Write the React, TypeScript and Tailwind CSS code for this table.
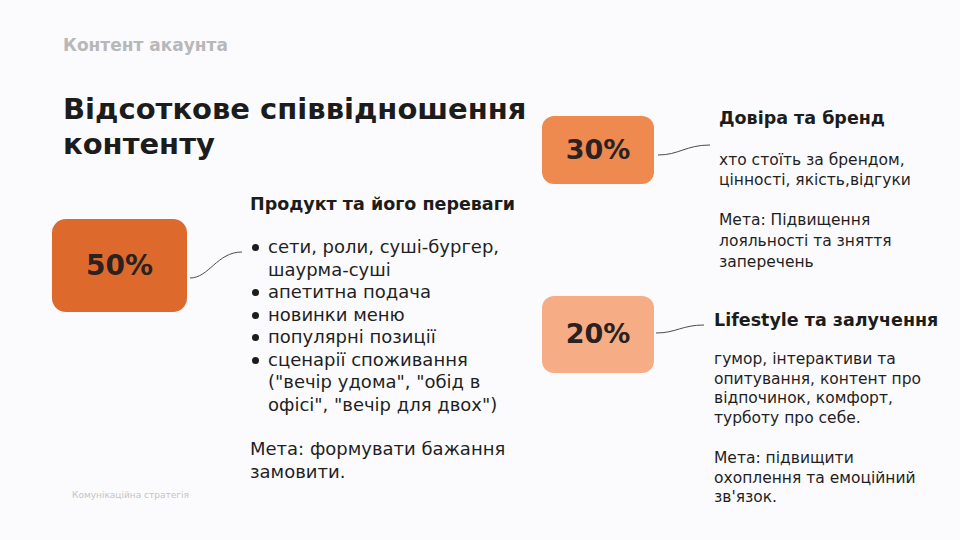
import React from "react";

const font = { fontFamily: '"DejaVu Sans", "Noto Sans", sans-serif' };

function Connector({ w, h, d }: { w: number; h: number; d: string }) {
  return (
    <svg width={w} height={h} viewBox={`0 0 ${w} ${h}`} className="shrink-0">
      <path d={d} fill="none" stroke="#4a4a4a" strokeWidth="1" />
    </svg>
  );
}

function Bullet({ children }: { children: React.ReactNode }) {
  return (
    <li className="flex">
      <span className="w-[18px] shrink-0 flex items-start pt-[8px] pl-[2px]">
        <span className="block w-[7px] h-[7px] rounded-full bg-[#1c1c1c]" />
      </span>
      <span>{children}</span>
    </li>
  );
}

export default function App() {
  return (
    <div
      className="w-[960px] h-[540px] bg-[#fbfbfd] flex text-[#1c1c1c] overflow-hidden whitespace-nowrap"
      style={font}
    >
      {/* left column */}
      <div className="w-[542px] pl-[52px] flex flex-col shrink-0">
        <div className="ml-[11px] mt-[35px] text-[17px] leading-[20px] font-bold text-[#b8b8b8]">
          Контент акаунта
        </div>
        <h1 className="ml-[11px] mt-[37px] text-[29px] leading-[35px] font-bold">
          Відсоткове співвідношення
          <br />
          контенту
        </h1>

        <div className="flex items-start mt-[31px]">
          <div className="mt-[26px] w-[135px] h-[93px] rounded-[14px] bg-[#dd6a2c] grid place-content-center shrink-0">
            <span className="text-[28px] font-bold text-[#2a2220]">50%</span>
          </div>
          <Connector w={63} h={100} d="M3 85 C 22 85, 30 59, 55 59" />
          <div>
            <h2 className="text-[17.5px] leading-[22px] font-bold">Продукт та його переваги</h2>
            <ul className="mt-[21px] text-[18px] leading-[22.5px] text-[#1f1f1f]">
              <Bullet>
                сети, роли, суші-бургер,
                <br />
                шаурма-суші
              </Bullet>
              <Bullet>апетитна подача</Bullet>
              <Bullet>новинки меню</Bullet>
              <Bullet>популярні позиції</Bullet>
              <Bullet>
                сценарії споживання
                <br />
                ("вечір удома", "обід в
                <br />
                офісі", "вечір для двох")
              </Bullet>
            </ul>
            <p className="mt-[22px] text-[18px] leading-[22.5px] text-[#1f1f1f]">
              Мета: формувати бажання
              <br />
              замовити.
            </p>
          </div>
        </div>

        <div className="ml-[20px] mt-[6px] text-[9px] leading-[12px] text-[#c4c4c4]">
          Комунікаційна стратегія
        </div>
      </div>

      {/* right column */}
      <div className="flex-1 flex flex-col pt-[107px]">
        <div className="flex items-start">
          <div className="mt-[9px] w-[112px] h-[68px] rounded-[12px] bg-[#ee8a4f] grid place-content-center shrink-0">
            <span className="text-[27px] font-bold text-[#2a2220]">30%</span>
          </div>
          <Connector w={65} h={60} d="M4 48 C 25 48, 32 38, 56 38" />
          <div>
            <h2 className="text-[17.5px] leading-[22px] font-bold">Довіра та бренд</h2>
            <p className="mt-[21px] text-[15.5px] leading-[20px] text-[#1f1f1f]">
              хто стоїть за брендом,
              <br />
              цінності, якість,відгуки
            </p>
            <p className="mt-[20px] text-[15.5px] leading-[21px] text-[#1f1f1f]">
              Мета: Підвищення
              <br />
              лояльності та зняття
              <br />
              заперечень
            </p>
          </div>
        </div>

        <div className="flex items-start mt-[23px]">
          <div className="w-[112px] h-[77px] rounded-[12px] bg-[#f6ad86] grid place-content-center shrink-0">
            <span className="text-[27px] font-bold text-[#2a2220]">20%</span>
          </div>
          <Connector w={60} h={50} d="M2 37 C 22 37, 28 29, 50 29" />
          <div className="mt-[13px]">
            <h2 className="text-[17.5px] leading-[22px] font-bold">Lifestyle та залучення</h2>
            <p className="mt-[19px] text-[15.5px] leading-[19.7px] text-[#1f1f1f]">
              гумор, інтерактиви та
              <br />
              опитування, контент про
              <br />
              відпочинок, комфорт,
              <br />
              турботу про себе.
            </p>
            <p className="mt-[20px] text-[15.5px] leading-[19.7px] text-[#1f1f1f]">
              Мета: підвищити
              <br />
              охоплення та емоційний
              <br />
              зв'язок.
            </p>
          </div>
        </div>
      </div>
    </div>
  );
}
